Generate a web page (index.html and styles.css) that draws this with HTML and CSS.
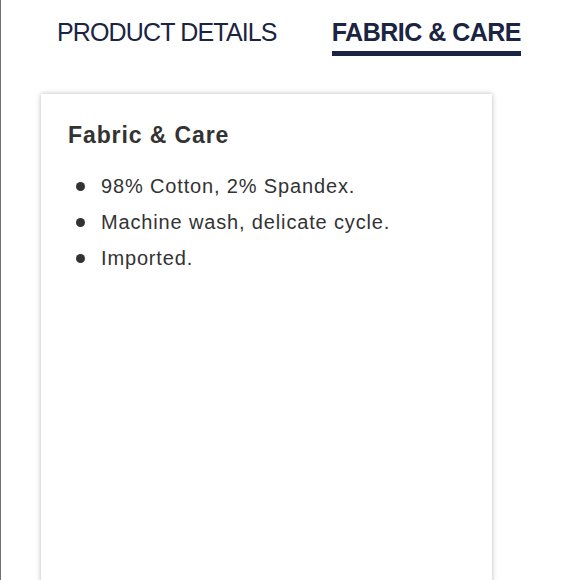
FILE: index.html
```html
<!DOCTYPE html>
<html lang="en">
<head>
    <meta charset="UTF-8">
    <meta name="viewport" content="width=device-width, initial-scale=1.0">
    <title>Fabric &amp; Care</title>
    <link rel="stylesheet" href="styles.css">
</head>
<body>
    <div class="page">
        <!-- TABS -->
        <div class="tabs">
            <div class="tab">PRODUCT DETAILS</div>
            <div class="tab active">FABRIC &amp; CARE</div>
        </div>

        <!-- DETAILS CARD -->
        <div class="card">
            <h2 class="card-title">Fabric &amp; Care</h2>
            <ul class="care-list">
                <li>98% Cotton, 2% Spandex.</li>
                <li>Machine wash, delicate cycle.</li>
                <li>Imported.</li>
            </ul>
        </div>
    </div>
</body>
</html>
```

FILE: styles.css
```css
/* General Styles */
body {
    margin: 0;
    background: #fff;
    font-family: "Liberation Sans", Arial, sans-serif;
}

.page {
    height: 580px;
    border-left: 1px solid #707070;
    overflow: hidden;
}

/* Tabs */
.tabs {
    display: flex;
    gap: 55px;
    margin-left: 56px;
    padding-top: 17px;
}

.tab {
    font-size: 25px;
    line-height: 30px;
    letter-spacing: -0.85px;
    color: #1b2442;
    padding-bottom: 4px;
    border-bottom: 5px solid transparent;
}

.tab.active {
    font-weight: bold;
    letter-spacing: -0.5px;
    border-bottom-color: #1b2442;
}

/* Card */
.card {
    margin: 38px 0 0 40px;
    width: 451px;
    height: 500px;
    padding: 27px 0 0 27px;
    box-sizing: border-box;
    background: #fff;
    box-shadow: 0 0 5px rgba(0, 0, 0, 0.28);
}

.card-title {
    margin: 0;
    font-size: 23px;
    line-height: 28px;
    letter-spacing: 0.9px;
    color: #333;
}

.care-list {
    list-style: none;
    margin: 19px 0 0;
    padding: 0;
}

.care-list li {
    display: flex;
    align-items: center;
    font-size: 20px;
    line-height: 36px;
    letter-spacing: 0.85px;
    color: #333;
}

.care-list li::before {
    content: "";
    width: 9px;
    height: 9px;
    margin: 0 16px 0 8px;
    border-radius: 50%;
    background: #333;
    flex-shrink: 0;
}
```
